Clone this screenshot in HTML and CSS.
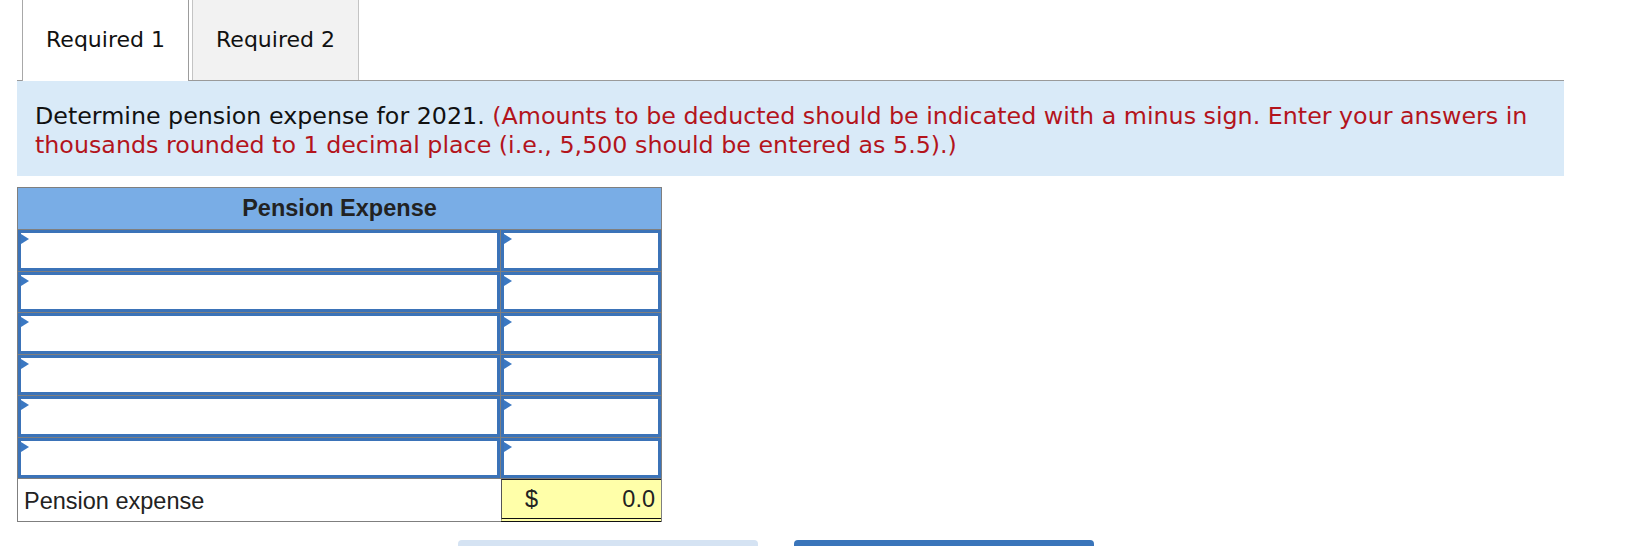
FILE: index.html
```html
<!DOCTYPE html>
<html lang="en">
<head>
<meta charset="utf-8">
<title>Pension Expense</title>
<link rel="stylesheet" href="styles.css">
</head>
<body>
<div class="page">
  <div class="tabs">
    <div class="tab active">Required 1</div>
    <div class="tab">Required 2</div>
  </div>
  <p class="instructions">Determine pension expense for 2021. <span class="note">(Amounts to be deducted should be indicated with a minus sign. Enter your answers in thousands rounded to 1 decimal place (i.e., 5,500 should be entered as 5.5).)</span></p>

  <div class="sheet">
    <div class="sheet-head">Pension Expense</div>
    <div class="row"><div class="cell wide"><div class="field"></div></div><div class="cell narrow"><div class="field"></div></div></div>
    <div class="row"><div class="cell wide"><div class="field"></div></div><div class="cell narrow"><div class="field"></div></div></div>
    <div class="row"><div class="cell wide"><div class="field"></div></div><div class="cell narrow"><div class="field"></div></div></div>
    <div class="row"><div class="cell wide"><div class="field"></div></div><div class="cell narrow"><div class="field"></div></div></div>
    <div class="row"><div class="cell wide"><div class="field"></div></div><div class="cell narrow"><div class="field"></div></div></div>
    <div class="row"><div class="cell wide"><div class="field"></div></div><div class="cell narrow"><div class="field"></div></div></div>
    <div class="row total">
      <div class="label">Pension expense</div>
      <div class="amount"><span class="cur">$</span><span class="val">0.0</span></div>
    </div>
  </div>

  <div class="nav">
    <button class="btn prev" aria-label="Required 1"></button>
    <button class="btn next" aria-label="Required 2"></button>
  </div>
</div>
</body>
</html>
```

FILE: styles.css
```css
html, body {
  margin: 0;
  padding: 0;
  background: #ffffff;
}

.page {
  padding-left: 17px;
  width: 1547px;
}

.tabs {
  display: flex;
  gap: 3px;
  padding-left: 5px;
  height: 80px;
  border-bottom: 1px solid #9a9a9a;
}

.tab {
  box-sizing: border-box;
  width: 167px;
  height: 80px;
  display: flex;
  align-items: center;
  justify-content: center;
  padding-bottom: 2px;
  font-family: "DejaVu Sans", Verdana, sans-serif;
  font-size: 22px;
  color: #111;
  background: #f2f2f2;
  border-left: 1px solid #c4c4c4;
  border-right: 1px solid #c4c4c4;
}

.tab.active {
  background: #ffffff;
  height: 81px;
  margin-bottom: -1px;
  border-left-color: #a8a8a8;
  border-right-color: #9c9c9c;
}

.instructions {
  margin: 0;
  background: #d9eaf8;
  padding: 21px 16px 16px 18px;
  font-family: "DejaVu Sans", Verdana, sans-serif;
  font-size: 23.75px;
  line-height: 29px;
  color: #111;
}

.note {
  color: #b3141c;
}

.sheet {
  margin-top: 11px;
  width: 645px;
  box-sizing: border-box;
  border: 1px solid #7f7f7f;
  border-bottom: none;
  font-family: "Liberation Sans", Arial, sans-serif;
  color: #222;
}

.sheet-head {
  height: 41px;
  line-height: 41px;
  background: #79ade6;
  border-bottom: 1px solid #7f7f7f;
  text-align: center;
  font-weight: bold;
  font-size: 23.5px;
  color: #222;
}

.row {
  display: flex;
  box-sizing: border-box;
  height: 41.5px;
  border-bottom: 1px solid #7f7f7f;
}

.cell {
  box-sizing: border-box;
  height: 100%;
}

.cell.wide {
  width: 483px;
  border-right: 1px solid #7f7f7f;
}

.cell.narrow {
  width: 160px;
}

.field {
  position: relative;
  box-sizing: border-box;
  height: 100%;
  border: 3px solid #3b73b8;
  background: #ffffff;
}

.field::before {
  content: "";
  position: absolute;
  left: 0;
  top: 1px;
  width: 0;
  height: 0;
  border-left: 8px solid #3b78c2;
  border-top: 5.5px solid transparent;
  border-bottom: 5.5px solid transparent;
}

.row.total {
  height: 43px;
  border-bottom: none;
  align-items: stretch;
}

.label {
  box-sizing: border-box;
  width: 483px;
  border-bottom: 1px solid #7f7f7f;
  display: flex;
  align-items: center;
  padding-left: 6px;
  padding-top: 2px;
  font-size: 23.5px;
  color: #222;
}

.amount {
  box-sizing: border-box;
  width: 160px;
  background: #ffffa9;
  border-left: 1px solid #555;
  border-top: 1px solid #222;
  border-bottom: 4px double #111;
  display: flex;
  align-items: center;
  justify-content: space-between;
  padding: 0 6px 0 23px;
  font-size: 23.5px;
  color: #222;
}

.nav {
  display: flex;
  gap: 36px;
  margin-top: 18px;
  padding-left: 441px;
}

.btn {
  width: 300px;
  height: 44px;
  border: none;
  border-radius: 4px;
  padding: 0;
}

.btn.prev {
  background: #d5e3f3;
}

.btn.next {
  background: #3a75ba;
}
```
